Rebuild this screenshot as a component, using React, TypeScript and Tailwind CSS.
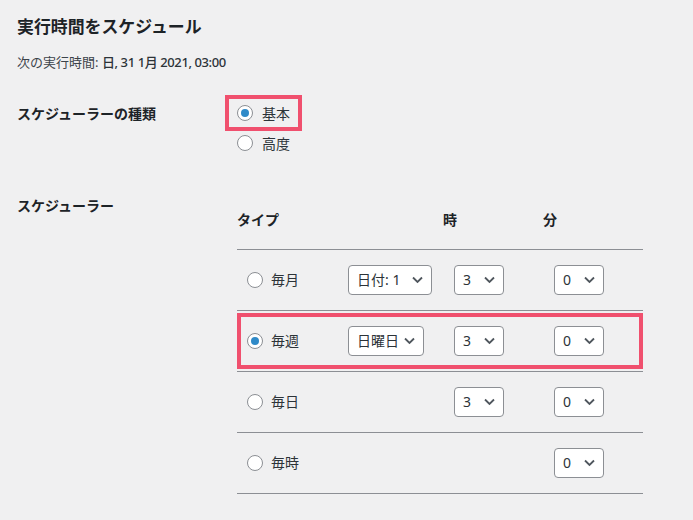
import React from "react"

type Row = {
  label: string
  checked?: boolean
  day?: { value: string; width: string }
  hour?: string
  minute: string
}

const rows: Row[] = [
  { label: "毎月", day: { value: "日付: 1", width: "w-[84px]" }, hour: "3", minute: "0" },
  { label: "毎週", checked: true, day: { value: "日曜日", width: "w-[76px]" }, hour: "3", minute: "0" },
  { label: "毎日", hour: "3", minute: "0" },
  { label: "毎時", minute: "0" },
]

function Radio({ checked }: { checked?: boolean }) {
  return (
    <span className="flex h-4 w-4 shrink-0 items-center justify-center rounded-full border border-[#8c8f94] bg-white">
      {checked && <span className="h-2 w-2 rounded-full bg-[#2f8ac8]" />}
    </span>
  )
}

function Select({ value, width }: { value: string; width: string }) {
  return (
    <div
      className={`relative flex h-[30px] ${width} items-center rounded-[4px] border border-[#8c8f94] bg-white pl-[8px] text-[14px] text-[#2c3338]`}
    >
      <span className="whitespace-nowrap leading-[20px]">{value}</span>
      <svg
        className="absolute right-[8px] top-1/2 -translate-y-1/2"
        width="11"
        height="7"
        viewBox="0 0 11 7"
        fill="none"
      >
        <polyline points="1,1 5.5,5.5 10,1" stroke="#50575e" strokeWidth="1.8" />
      </svg>
    </div>
  )
}

export default function App() {
  return (
    <div
      className="min-h-screen bg-[#f0f0f1] pl-[17px] pt-[17px] text-[#1d2327]"
      style={{ fontFamily: '"Noto Sans", "Noto Sans CJK JP", sans-serif' }}
    >
      <h2 className="text-[16.9px] font-semibold leading-[20px]">実行時間をスケジュール</h2>
      <p className="mt-[15px] text-[13px] leading-[20px] text-[#3c434a]">
        次の実行時間:{" "}
        <span className="font-medium tracking-[-0.4px] text-[#2c3338]">日, 31 1月 2021, 03:00</span>
      </p>

      <div className="mt-[26px] flex">
        <div className="flex h-[30px] w-[220px] items-center text-[14px] font-semibold">スケジューラーの種類</div>
        <div className="flex flex-col text-[14px] text-[#2c3338]">
          <label className="relative flex h-[30px] items-center gap-[9px]">
            <Radio checked />
            基本
            <span className="pointer-events-none absolute -left-[12px] -top-[3px] h-[36px] w-[77px] border-4 border-[#f0506e]" />
          </label>
          <label className="flex h-[30px] items-center gap-[9px]">
            <Radio />
            高度
          </label>
        </div>
      </div>

      <div className="mt-[32px] flex">
        <div className="flex h-[30px] w-[220px] items-center text-[14px] font-semibold">スケジューラー</div>
        <div className="w-[406px]">
          <div className="flex border-b border-[#8c8f94] pb-[19px] pt-[20px] text-[14px] font-semibold leading-[20px]">
            <span className="w-[206px]">タイプ</span>
            <span className="w-[100px]">時</span>
            <span>分</span>
          </div>
          {rows.map((row) => (
            <div
              key={row.label}
              className="relative flex h-[61px] items-center border-b border-[#8c8f94] pb-px text-[14px] text-[#2c3338]"
            >
              <label className="flex w-[111px] items-center gap-[8px] pl-[10px]">
                <Radio checked={row.checked} />
                {row.label}
              </label>
              <div className="w-[106px]">{row.day && <Select value={row.day.value} width={row.day.width} />}</div>
              <div className="w-[100px]">{row.hour && <Select value={row.hour} width="w-[50px]" />}</div>
              <Select value={row.minute} width="w-[50px]" />
              {row.checked && (
                <span className="pointer-events-none absolute left-0 right-0 top-[2px] h-[56px] border-4 border-[#f0506e]" />
              )}
            </div>
          ))}
        </div>
      </div>
    </div>
  )
}
